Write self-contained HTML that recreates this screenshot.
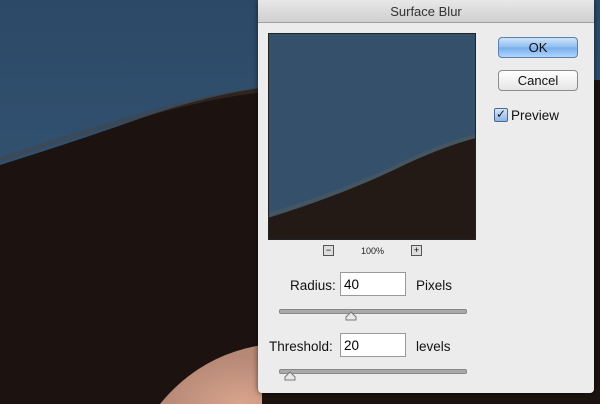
<!DOCTYPE html>
<html><head><style>
body{margin:0;width:600px;height:404px;overflow:hidden;position:relative;font-family:"Liberation Sans",sans-serif;background:#1d1411}
.dlg{position:absolute;left:258px;top:0;width:336px;height:393px;background:#ececec;border-radius:0 0 4px 4px;box-shadow:0 0 6px rgba(0,0,0,.6)}
.title{height:22px;background:linear-gradient(#e8e8e8,#cfcfcf);border-bottom:1px solid #a0a0a0;text-align:center;font-size:13px;line-height:23px;color:#333}
.btn{position:absolute;left:240px;width:78px;height:19px;border:1px solid #8a8a8a;border-radius:4px;background:linear-gradient(#fff,#e6e6e6);font-size:13px;text-align:center;line-height:19px;color:#111}
.ok{background:linear-gradient(#cfe3fb,#8dbcf1 50%,#74adef 51%,#b3d5fb);border-color:#5b7fae}
.lbl{position:absolute;font-size:13.5px;color:#111}
.inp{position:absolute;width:66px;height:24px;background:#fff;border:1px solid #999;font-size:13.5px;line-height:23px;padding-left:3px;box-sizing:border-box}
.track{position:absolute;left:21px;width:186px;height:3px;background:#a9a9a9;border:1px solid #888;border-radius:2px}
</style></head><body>
<svg width="600" height="404" style="position:absolute;left:0;top:0">
<defs><linearGradient id="sky" x1="0" y1="0" x2="0" y2="1"><stop offset="0" stop-color="#2c4a68"/><stop offset="1" stop-color="#3a5a7a"/></linearGradient>
<radialGradient id="skin" cx="0.8" cy="1" r="0.8"><stop offset="0" stop-color="#d9a48c"/><stop offset="1" stop-color="#b68876"/></radialGradient></defs>
<rect width="600" height="404" fill="url(#sky)"/>
<path d="M0 165 Q80 140 150 115 Q210 95 260 88 L600 80 L600 404 L0 404Z" fill="#1c1310"/>
<path d="M0 160 Q90 130 160 110 Q220 94 262 90" stroke="#4a4038" stroke-width="5" fill="none" opacity=".4"/>
<path d="M160 404 Q200 355 262 345 L262 404Z" fill="url(#skin)"/>
</svg>
<div class="dlg">
<div class="title">Surface Blur</div>
<svg style="position:absolute;left:10px;top:33px" width="208" height="207">
<rect width="208" height="207" fill="#35506b"/>
<path d="M0 185 Q80 160 140 130 Q180 112 208 105 L208 207 L0 207Z" fill="#231915"/>
<path d="M0 182 Q80 158 140 128 Q180 110 208 103" stroke="#4d5a5c" stroke-width="4" fill="none" opacity=".6"/>
<rect x=".5" y=".5" width="207" height="206" fill="none" stroke="#222"/>
</svg>
<div style="position:absolute;left:65px;top:245px;width:9px;height:9px;border:1px solid #555;font-size:9px;line-height:8px;text-align:center;background:#ddd">−</div>
<div style="position:absolute;left:103px;top:246px;font-size:9px;color:#222">100%</div>
<div style="position:absolute;left:153px;top:245px;width:9px;height:9px;border:1px solid #555;font-size:9px;line-height:9px;text-align:center;background:#ddd">+</div>
<div class="btn ok" style="top:37px">OK</div>
<div class="btn" style="top:70px">Cancel</div>
<div style="position:absolute;left:236px;top:108px;width:12px;height:12px;border:1px solid #4a6a95;border-radius:2px;background:linear-gradient(#d6e7fb,#8bb4e6);font-size:12px;line-height:11px;text-align:center;color:#111">✓</div>
<div class="lbl" style="left:253px;top:108px">Preview</div>
<div class="lbl" style="left:32px;top:278px">Radius:</div>
<div class="inp" style="left:82px;top:272px">40</div>
<div class="lbl" style="left:158px;top:278px">Pixels</div>
<div class="track" style="top:309px"></div>
<svg style="position:absolute;left:87px;top:311px" width="12" height="10"><path d="M1 9 L1 6 L6 1 L11 6 L11 9Z" fill="#e8e8e8" stroke="#777"/></svg>
<div class="lbl" style="left:11px;top:339px">Threshold:</div>
<div class="inp" style="left:82px;top:333px">20</div>
<div class="lbl" style="left:158px;top:339px">levels</div>
<div class="track" style="top:369px"></div>
<svg style="position:absolute;left:26px;top:371px" width="12" height="10"><path d="M1 9 L1 6 L6 1 L11 6 L11 9Z" fill="#e8e8e8" stroke="#777"/></svg>
</div>
</body></html>
